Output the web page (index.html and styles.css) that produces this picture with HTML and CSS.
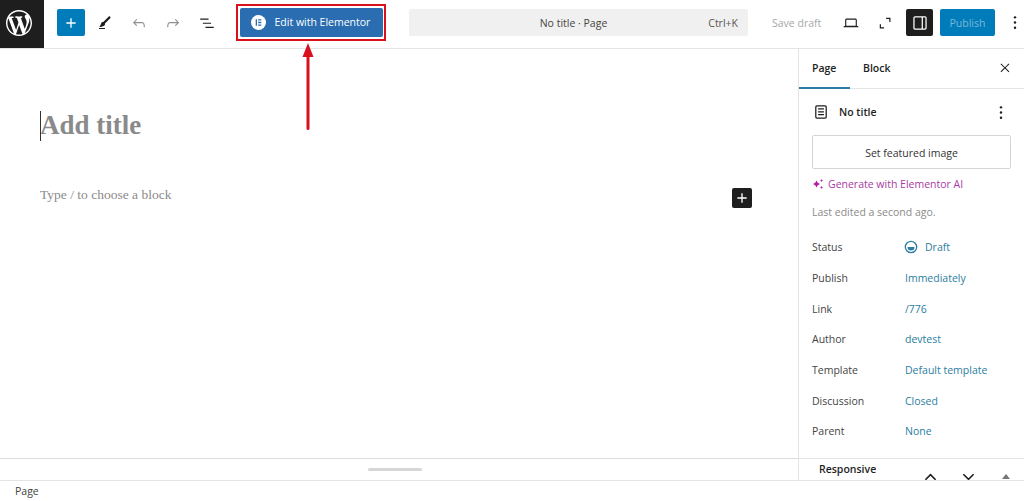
FILE: index.html
```html
<!DOCTYPE html>
<html lang="en">
<head>
<meta charset="utf-8">
<title>Add title</title>
<link rel="stylesheet" href="styles.css">
</head>
<body>
<div class="app">
  <header class="topbar">
    <div class="logo">
      <svg class="logo-svg" viewBox="0 0 20 20"><path fill="#fff" d="M20 10c0-5.51-4.49-10-10-10C4.48 0 0 4.49 0 10c0 5.52 4.48 10 10 10 5.51 0 10-4.48 10-10zM7.78 15.37L4.37 6.22c.55-.02 1.17-.08 1.17-.08.5-.06.44-1.13-.06-1.11 0 0-1.45.11-2.37.11-.18 0-.37 0-.58-.01C4.12 2.69 6.87 1.11 10 1.11c2.33 0 4.45.87 6.05 2.34-.68-.11-1.65.39-1.65 1.58 0 .74.45 1.36.9 2.1.35.61.55 1.36.55 2.46 0 1.49-1.4 5-1.4 5l-3.03-8.37c.54-.02.82-.17.82-.17.5-.05.44-1.25-.06-1.22 0 0-1.44.12-2.38.12-.87 0-2.33-.12-2.33-.12-.5-.03-.56 1.2-.06 1.22l.92.08 1.26 3.41zM17.41 10c.24-.64.74-1.87.43-4.25.7 1.29 1.05 2.71 1.05 4.25 0 3.29-1.73 6.24-4.4 7.78.97-2.59 1.94-5.2 2.92-7.78zM6.1 18.09C3.12 16.65 1.11 13.53 1.11 10c0-1.3.23-2.48.72-3.59C3.25 10.3 4.67 14.2 6.1 18.09zm4.03-6.63l2.58 6.98c-.86.29-1.76.45-2.71.45-.79 0-1.57-.11-2.29-.33.81-2.38 1.62-4.74 2.42-7.1z"/></svg>
    </div>
    <div class="add-btn">
      <svg class="ico-plus" viewBox="0 0 24 24"><path fill="#fff" d="M11 5h2v6h6v2h-6v6h-2v-6H5v-2h6z"/></svg>
    </div>
    <div class="tools">
      <svg class="ico" viewBox="0 0 24 24"><path fill="#1e1e1e" d="M4 20h8v-1.5H4V20zM18.9 3.5c-.6-.6-1.5-.6-2.1 0l-7.2 7.2c-.4-.1-.7 0-1.1.1-.5.2-1.5.7-1.9 2.2-.4 1.7-.8 2.2-1.1 2.7-.1.1-.2.3-.3.4l-.6 1.1H6c2 0 3.4-.4 4.7-1.4.8-.6 1.2-1.4 1.3-2.3 0-.3 0-.5-.1-.7L19 5.7c.5-.6.5-1.6-.1-2.2z"/></svg>
      <svg class="ico" viewBox="0 0 24 24"><path fill="#8f8f8f" d="M18.3 11.7c-.6-.6-1.4-.9-2.3-.9H6.7l2.9-3.3-1.1-1-4.5 5L8.5 16l1-1-2.7-2.7H16c.5 0 .9.2 1.3.5 1 1 1 3.4 1 4.5v.3h1.5v-.2c0-1.5 0-4.3-1.5-5.7z"/></svg>
      <svg class="ico" viewBox="0 0 24 24"><path fill="#8f8f8f" d="M15.6 6.5l-1.1 1 2.9 3.3H8c-.9 0-1.7.3-2.3.9-1.4 1.5-1.4 4.2-1.4 5.6v.2h1.5v-.3c0-1.1 0-3.5 1-4.5.3-.3.7-.5 1.3-.5h9.2L14.5 15l1.1 1.1 4.6-4.6-4.6-5z"/></svg>
      <svg class="ico" viewBox="0 0 24 24"><path fill="#1e1e1e" d="M3 6h11v1.5H3V6zm3.5 5.5h11V13h-11v-1.5zM21 17H10v1.5h11V17z"/></svg>
    </div>
    <div class="frame">
      <div class="elementor-btn">
        <svg class="ico-el" viewBox="0 0 16 16"><circle cx="8" cy="8" r="8" fill="#fff"/><path fill="#2a6db0" d="M5 4.5h1.4v7H5zM7.6 4.5H11v1.4H7.6zM7.6 7.3H11v1.4H7.6zM7.6 10.1H11v1.4H7.6z"/></svg>
        <span>Edit with Elementor</span>
      </div>
    </div>
    <div class="command">
      <span class="command-title">No title · Page</span>
      <span class="command-key">Ctrl+K</span>
    </div>
    <span class="save">Save draft</span>
    <svg class="ico laptop" viewBox="0 0 24 24"><path fill="#1e1e1e" d="M20.5 16h-.7V8c0-1.1-.9-2-2-2H6.2c-1.1 0-2 .9-2 2v8h-.7c-.8 0-1.5.7-1.5 1.5h20c0-.8-.7-1.5-1.5-1.5zM5.7 8c0-.3.2-.5.5-.5h11.6c.3 0 .5.2.5.5v7.6H5.7V8z"/></svg>
    <svg class="ico expand" viewBox="0 0 24 24"><path fill="none" stroke="#1e1e1e" stroke-width="1.6" d="M13.5 5.8h5v5M5.8 13.5v5h5"/></svg>
    <div class="panel-btn">
      <svg class="ico-panel" viewBox="0 0 24 24"><path fill="#fff" d="M18 4H6c-1.1 0-2 .9-2 2v12c0 1.100.9 2 2 2h12c1.100 0 2-.9 2-2V6c0-1.100-.9-2-2-2zm-4 14.500H6c-.3 0-.5-.2-.5-.5V6c0-.3.2-.5.5-.5h8v13zm4.500-.5c0 .3-.2.5-.5.5h-2.500v-13H18c.3 0 .5.2.5.5v12z"/></svg>
    </div>
    <div class="publish">Publish</div>
    <svg class="dots" viewBox="0 0 4 16"><circle cx="2" cy="2.500" r="1.300"/><circle cx="2" cy="8" r="1.300"/><circle cx="2" cy="13.500" r="1.300"/></svg>
  </header>

  <div class="body">
    <main class="main">
      <div class="editor">
        <h1 class="title"><span class="caret"></span>Add title</h1>
        <div class="block-row">
          <p class="placeholder">Type / to choose a block</p>
          <div class="block-add">
            <svg class="ico-block" viewBox="0 0 24 24"><path fill="#fff" d="M11 5h2v6h6v2h-6v6h-2v-6H5v-2h6z"/></svg>
          </div>
        </div>
      </div>
      <div class="resizer"><span class="handle"></span></div>
    </main>

    <aside class="sidebar">
      <div class="tabs">
        <span class="tab active">Page</span>
        <span class="tab">Block</span>
        <svg class="close" viewBox="0 0 24 24"><path fill="#1e1e1e" d="M13 11.800l5.500-5.500-1.100-1.100-5.500 5.500-5.500-5.500-1.100 1.100 5.500 5.500-5.500 5.500 1.100 1.100 5.500-5.500 5.500 5.500 1.100-1.100z"/></svg>
      </div>
      <div class="panel">
        <div class="doc-head">
          <svg class="doc-ico" viewBox="0 0 24 24"><path fill="#1e1e1e" d="M15.500 7.500h-7V9h7V7.500Zm-7 3.500h7v1.500h-7V11Zm7 3.500h-7V16h7v-1.500Z"/><path fill="#1e1e1e" d="M17 4H7a2 2 0 0 0-2 2v12a2 2 0 0 0 2 2h10a2 2 0 0 0 2-2V6a2 2 0 0 0-2-2Zm-10 1.500h10a.5.5 0 0 1 .5.5v12a.5.5 0 0 1-.5.5H7a.5.5 0 0 1-.5-.5V6a.5.5 0 0 1 .5-.5Z"/></svg>
          <span class="doc-title">No title</span>
          <svg class="doc-dots" viewBox="0 0 4 16"><circle cx="2" cy="2.500" r="1.300"/><circle cx="2" cy="8" r="1.300"/><circle cx="2" cy="13.500" r="1.300"/></svg>
        </div>
        <div class="featured">Set featured image</div>
        <div class="generate">
          <svg class="spark" viewBox="0 0 12 12"><path fill="#b01fa8" d="M4.500 2.500l1.300 2.200L8 6 5.800 7.300 4.500 9.500 3.200 7.300 1 6l2.200-1.300zM9.500 1l.5 1 1 .5-1 .5-.5 1-.5-1-1-.5 1-.5zM9.500 8l.5 1 1 .5-1 .5-.5 1-.5-1-1-.5 1-.5z"/></svg>
          <span>Generate with Elementor AI</span>
        </div>
        <div class="edited">Last edited a second ago.</div>
        <dl class="meta">
          <div class="meta-row">
            <dt>Status</dt>
            <dd class="status">
              <svg class="draft-ico" viewBox="0 0 16 16"><circle cx="8" cy="8" r="6.500" fill="none" stroke="#2b7ea1" stroke-width="1.500"/><path fill="#2b7ea1" d="M4 8h8a4 4 0 0 1-8 0z"/></svg>
              Draft
            </dd>
          </div>
          <div class="meta-row"><dt>Publish</dt><dd>Immediately</dd></div>
          <div class="meta-row"><dt>Link</dt><dd>/776</dd></div>
          <div class="meta-row"><dt>Author</dt><dd>devtest</dd></div>
          <div class="meta-row"><dt>Template</dt><dd>Default template</dd></div>
          <div class="meta-row"><dt>Discussion</dt><dd>Closed</dd></div>
          <div class="meta-row"><dt>Parent</dt><dd>None</dd></div>
        </dl>
      </div>
      <div class="responsive">
        <span class="responsive-title">Responsive</span>
        <svg class="chev" viewBox="0 0 14 8"><path fill="none" stroke="#1e1e1e" stroke-width="1.700" d="M1.500 7L7 1.500 12.500 7"/></svg>
        <svg class="chev" viewBox="0 0 14 8"><path fill="none" stroke="#1e1e1e" stroke-width="1.700" d="M1.500 1L7 6.500 12.500 1"/></svg>
        <svg class="tri" viewBox="0 0 8 5"><path fill="#777" d="M4 0l4 5H0z"/></svg>
      </div>
    </aside>
  </div>

  <footer class="status-bar">Page</footer>

  <svg class="arrow" viewBox="0 0 12 88"><path fill="#d9101e" d="M6 0l5.500 14H7.500V85.500a1.500 1.500 0 0 1-3 0V14H.5z"/></svg>
</div>
</body>
</html>
```
FILE: styles.css
```css
* { box-sizing: border-box; }
html, body { margin: 0; padding: 0; height: 100%; }
body {
  background: #fff;
  color: #1e1e1e;
  font-family: "Open Sans", "Liberation Sans", sans-serif;
  font-size: 10.5px;
  overflow: hidden;
}
.app {
  position: relative;
  display: flex;
  flex-direction: column;
  height: 501px;
  width: 1024px;
}

/* top bar */
.topbar {
  display: flex;
  align-items: center;
  height: 49px;
  padding-bottom: 3px;
  flex: none;
  border-bottom: 1px solid #e4e4e4;
}
.logo {
  width: 44px;
  height: 48px;
  margin-bottom: -3px;
  align-self: flex-start;
  background: #1e1e1e;
  display: flex;
  align-items: center;
  padding-left: 6px;
  flex: none;
}
.logo-svg { width: 26px; height: 26px; margin-top: -3px; }
.add-btn {
  width: 28px;
  height: 27px;
  margin-left: 13px;
  background: #007cba;
  border-radius: 2px;
  display: flex;
  align-items: center;
  justify-content: center;
  flex: none;
}
.ico-plus { width: 16px; height: 16px; }
.tools { display: flex; gap: 16px; margin-left: 11px; flex: none; }
.ico { width: 18px; height: 18px; flex: none; }
.frame {
  margin-left: 20px;
  padding: 1.500px 1.500px 2.500px;
  width: 150px;
  height: 37px;
  border: 2.500px solid #d9101e;
  flex: none;
}
.elementor-btn {
  height: 100%;
  background: #2a6db0;
  border-radius: 2px;
  color: #fff;
  display: flex;
  align-items: center;
  padding-left: 11px;
  gap: 9px;
  font-size: 10.5px;
  white-space: nowrap;
}
.ico-el { width: 15px; height: 15px; flex: none; }
.command {
  margin-left: 23px;
  width: 339px;
  height: 27px;
  background: #f0f0f0;
  border-radius: 2px;
  display: grid;
  grid-template-columns: 1fr auto 1fr;
  align-items: center;
  padding: 0 10px 0 0;
  flex: none;
}
.command-title { grid-column: 2; color: #444; }
.command-key { grid-column: 3; justify-self: end; color: #555; }
.save { margin-left: 24px; width: 50px; color: #a7a7a7; white-space: nowrap; flex: none; }
.laptop { margin-left: 20px; }
.expand { margin-left: 16px; }
.panel-btn {
  margin-left: 12px;
  width: 27px;
  height: 27px;
  background: #1e1e1e;
  border-radius: 2px;
  display: flex;
  align-items: center;
  justify-content: center;
  flex: none;
}
.ico-panel { width: 20px; height: 20px; }
.publish {
  margin-left: 7px;
  width: 55px;
  height: 27px;
  background: #007cba;
  border-radius: 2px;
  color: #7db7d8;
  display: flex;
  align-items: center;
  justify-content: center;
  flex: none;
}
.dots { margin-left: 18px; width: 4px; height: 15px; fill: #1e1e1e; flex: none; }

/* body */
.body { display: flex; flex: 1; min-height: 0; }
.main { flex: 1; min-width: 0; display: flex; flex-direction: column; }
.editor {
  flex: 1;
  padding: 59px 46px 0 40px;
  font-family: "Liberation Serif", serif;
}
.title {
  position: relative;
  margin: 0;
  height: 35px;
  line-height: 35px;
  font-size: 27px;
  font-weight: 700;
  color: #8a8a8a;
}
.caret {
  position: absolute;
  left: 0;
  top: 3px;
  width: 1px;
  height: 30px;
  background: #333;
}
.block-row {
  display: flex;
  align-items: center;
  justify-content: space-between;
  margin-top: 41px;
  height: 28px;
}
.placeholder { margin: 0 0 6px; font-size: 13.500px; color: #8a8a8a; }
.block-add {
  width: 20px;
  height: 20px;
  background: #1e1e1e;
  border-radius: 2px;
  display: flex;
  align-items: center;
  justify-content: center;
}
.ico-block { width: 16px; height: 16px; }
.resizer {
  height: 22px;
  flex: none;
  border-top: 1px solid #dcdcdc;
  display: flex;
  align-items: center;
  justify-content: center;
  padding-right: 8px;
}
.handle { width: 54px; height: 3px; background: #d6d6d6; border-radius: 2px; margin-bottom: 1px; }

/* sidebar */
.sidebar {
  width: 226px;
  flex: none;
  border-left: 1px solid #e4e4e4;
  display: flex;
  flex-direction: column;
  min-height: 0;
}
.tabs {
  display: flex;
  align-items: stretch;
  height: 40px;
  flex: none;
  border-bottom: 1px solid #e4e4e4;
}
.tab {
  padding: 0 13px 0 13px;
  margin-right: 0;
  display: flex;
  align-items: center;
  font-weight: 600;
  color: #1e1e1e;
  border-bottom: 2px solid transparent;
  margin-bottom: -1px;
}
.tab.active { border-bottom-color: #2b7ea1; width: 51px; padding-right: 0; }
.close { width: 16px; height: 16px; margin: 11px 11px 0 auto; }
.panel { flex: 1; padding: 0 13px; min-height: 0; }
.doc-head { display: flex; align-items: center; height: 46px; }
.doc-ico { width: 20px; height: 20px; margin-left: -1px; flex: none; }
.doc-title { margin-left: 8px; font-weight: 600; }
.doc-dots { margin-left: auto; margin-right: 8px; width: 4px; height: 15px; fill: #1e1e1e; }
.featured {
  height: 34px;
  padding-top: 1px;
  border: 1px solid #d4d4d4;
  border-radius: 2px;
  display: flex;
  align-items: center;
  justify-content: center;
  color: #333;
}
.generate {
  display: flex;
  align-items: center;
  gap: 4px;
  margin-top: 7px;
  height: 16px;
  color: #a93aa5;
}
.spark { width: 12px; height: 12px; flex: none; }
.edited { margin-top: 12px; color: #8a8a8a; height: 16px; line-height: 16px; }
.meta { margin: 12px 0 0; }
.meta-row {
  display: grid;
  grid-template-columns: 93px 1fr;
  align-items: center;
  height: 30.670px;
}
.meta-row dt { color: #444; }
.meta-row dd { margin: 0; color: #2b7ea1; }
.status { display: flex; align-items: center; gap: 7px; }
.draft-ico { width: 14px; height: 14px; margin-left: -1px; }
.responsive {
  height: 22px;
  flex: none;
  border-top: 1px solid #e4e4e4;
  display: flex;
  align-items: center;
  padding-left: 20px;
  padding-bottom: 2px;
  position: relative;
  overflow: hidden;
}
.responsive-title { font-weight: 600; width: 105px; }
.chev { width: 13px; height: 8px; margin-top: 17px; margin-right: 25px; flex: none; }
.tri { width: 8px; height: 5px; margin-top: 15px; margin-left: 2px; flex: none; }

/* footer */
.status-bar {
  height: 21px;
  flex: none;
  border-top: 1px solid #e4e4e4;
  padding-left: 15px;
  display: flex;
  align-items: center;
  color: #444;
}

/* annotation arrow */
.arrow {
  position: absolute;
  left: 302px;
  top: 43px;
  width: 12px;
  height: 88px;
}
```
